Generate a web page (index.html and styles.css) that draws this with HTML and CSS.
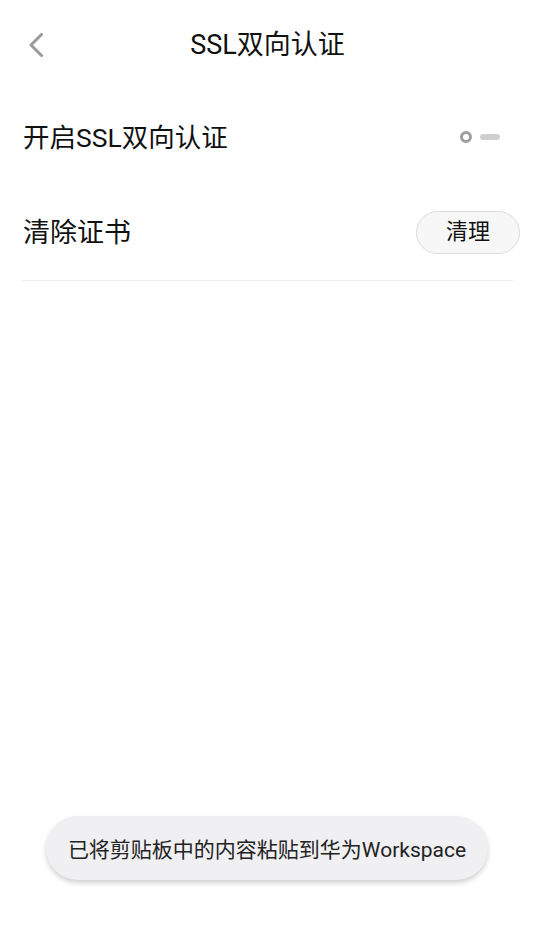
FILE: index.html
```html
<!DOCTYPE html>
<html lang="zh-CN">
<head>
<meta charset="utf-8">
<title>SSL双向认证</title>
<link rel="stylesheet" href="styles.css">
</head>
<body>
<div class="page">
  <header class="header">
    <span class="back" aria-label="返回">
      <svg width="16" height="24" viewBox="0 0 16 24"><path d="M13.5 1.5 L3 12 L13.5 22.5" fill="none" stroke="#9a9a9a" stroke-width="3" stroke-linecap="round" stroke-linejoin="round"/></svg>
    </span>
    <h1 class="title">SSL双向认证</h1>
  </header>
  <div class="row row-toggle">
    <span class="label label-long">开启SSL双向认证</span>
    <span class="toggle">
      <span class="toggle-ring"></span>
      <span class="toggle-bar"></span>
    </span>
  </div>
  <div class="row row-clear">
    <span class="label">清除证书</span>
    <button class="btn">清理</button>
  </div>
  <div class="divider"></div>
  <div class="toast">已将剪贴板中的内容粘贴到华为Workspace</div>
</div>
</body>
</html>
```
FILE: styles.css
```css
html, body {
  margin: 0;
  padding: 0;
  background: #ffffff;
}
body {
  font-family: Roboto, "Noto Sans CJK SC", sans-serif;
  color: #111111;
}
.page {
  position: relative;
  width: 535px;
  height: 951px;
  overflow: hidden;
}
.header {
  position: relative;
  height: 90px;
  display: flex;
  align-items: center;
  justify-content: center;
}
.back {
  position: absolute;
  left: 28px;
  top: 33px;
  width: 16px;
  height: 24px;
  display: flex;
}
.title {
  margin: 0;
  font-size: 27px;
  font-weight: 400;
  line-height: 1;
  color: #111;
}
.row {
  display: flex;
  align-items: center;
  justify-content: space-between;
  padding: 0 15px 0 23px;
}
.row-toggle {
  height: 94px;
  padding-right: 35px;
}
.row-clear {
  height: 96px;
}
.label {
  font-size: 27px;
  line-height: 1;
  color: #111;
  padding-top: 3px;
}
.label-long {
  font-size: 26.5px;
}
.toggle {
  display: flex;
  align-items: center;
  gap: 8px;
}
.toggle-ring {
  width: 6px;
  height: 6px;
  border: 3px solid #9e9e9e;
  border-radius: 50%;
}
.toggle-bar {
  width: 20px;
  height: 6px;
  border-radius: 3px;
  background: #cfcfcf;
}
.btn {
  width: 104px;
  height: 43px;
  border: 1px solid #dcdcdc;
  border-radius: 22px;
  background: #f7f7f7;
  font-family: Roboto, "Noto Sans CJK SC", sans-serif;
  font-size: 22px;
  color: #111;
  padding: 0;
  line-height: 1;
}
.divider {
  height: 1px;
  background: #eeeeee;
  margin: 0 22px;
}
.toast {
  position: absolute;
  left: 46px;
  top: 816px;
  width: 442px;
  height: 64px;
  border-radius: 32px;
  background: #f0f0f2;
  box-shadow: 0 3px 5px rgba(0, 0, 0, 0.18);
  display: flex;
  align-items: center;
  justify-content: center;
  font-size: 21px;
  color: #222;
  white-space: nowrap;
}
```
